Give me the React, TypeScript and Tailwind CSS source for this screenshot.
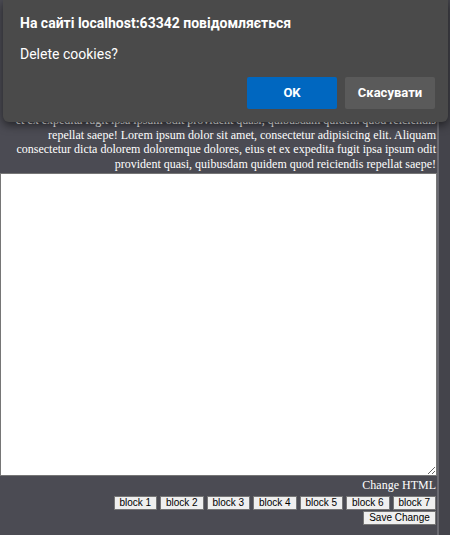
import React from "react";

const lines = [
  "consectetur adipisicing elit. Aliquam consectetur dicta dolorem doloremque dolores, eius",
  "et ex expedita fugit ipsa ipsum odit provident quasi, quibusdam quidem quod reiciendis",
  "repellat saepe! Lorem ipsum dolor sit amet, consectetur adipisicing elit. Aliquam",
  "consectetur dicta dolorem doloremque dolores, eius et ex expedita fugit ipsa ipsum odit",
  "provident quasi, quibusdam quidem quod reiciendis repellat saepe!",
];

const blocks = ["block 1", "block 2", "block 3", "block 4", "block 5", "block 6", "block 7"];

export default function App() {
  return (
    <div className="relative w-[450px] h-[535px] flex bg-[#44444b] overflow-hidden">
      <div className="w-[437px] bg-[#4b4b53] flex flex-col">
        <div className="h-[173px] flex flex-col justify-end items-end overflow-hidden pb-[2px] pr-[1px] text-white font-['Liberation_Serif',serif] text-[12px] leading-[14.5px]">
          {lines.map((l, i) => (
            <div key={i} className="whitespace-nowrap">
              {l}
            </div>
          ))}
        </div>
        <textarea className="block w-full h-[303px] bg-white border border-[#767676] outline-none" />
        <div className="flex flex-col items-end pr-[1px] pt-[2px]">
          <div className="text-white font-['Liberation_Serif',serif] text-[12px] leading-[14.5px]">
            Change HTML
          </div>
          <div className="flex gap-[3px] mt-[3px]">
            {blocks.map((b) => (
              <button
                key={b}
                className="h-[14px] w-[43.5px] bg-[#efefef] border border-[#767676] text-black font-['Liberation_Sans',Arial,sans-serif] text-[10px] leading-none flex items-center justify-center"
              >
                {b}
              </button>
            ))}
          </div>
          <button className="mt-[1px] h-[14px] w-[73px] bg-[#efefef] border border-[#767676] text-black font-['Liberation_Sans',Arial,sans-serif] text-[10px] leading-none flex items-center justify-center">
            Save Change
          </button>
        </div>
      </div>
      <div className="w-[2px] bg-[#6a6a71]" />
      <div className="flex-1" />

      <div className="absolute left-[3px] top-0 w-[445px] h-[122px] bg-[#4a4a4a] rounded-b-[6px] shadow-[0_3px_10px_rgba(0,0,0,0.55)] font-['Roboto',sans-serif] text-white">
        <div className="pl-[17px] pt-[13px] text-[14px] font-bold leading-[20px]">
          На сайті localhost:63342 повідомляється
        </div>
        <div className="pl-[17px] mt-[11px] text-[14px] leading-[20px]">Delete cookies?</div>
        <div className="flex justify-end gap-[8px] pr-[13px] mt-[13px]">
          <div className="w-[90px] h-[32px] rounded-[2px] bg-[#0067c0] flex items-center justify-center text-[13px] font-bold">
            OK
          </div>
          <div className="w-[90px] h-[32px] rounded-[2px] bg-[#5a5a5a] flex items-center justify-center text-[13px] font-bold">
            Скасувати
          </div>
        </div>
      </div>
    </div>
  );
}
